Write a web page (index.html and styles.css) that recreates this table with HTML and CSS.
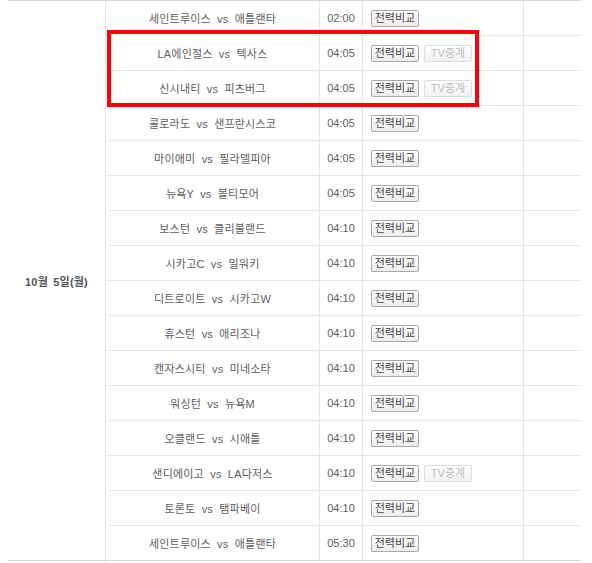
FILE: index.html
```html
<!DOCTYPE html>
<html lang="ko">
<head>
<meta charset="utf-8">
<title>경기 일정</title>
<link rel="stylesheet" href="styles.css">
</head>
<body>
<div class="schedule">
  <div class="date-cell">10월 5일(월)</div>
  <div class="rows">
    <div class="row"><div class="match">세인트루이스 vs 애틀랜타</div><div class="time">02:00</div><div class="btns"><span class="btn">전력비교</span></div><div class="extra"></div></div>
    <div class="row"><div class="match">LA에인절스 vs 텍사스</div><div class="time">04:05</div><div class="btns"><span class="btn">전력비교</span><span class="btn off">TV중계</span></div><div class="extra"></div></div>
    <div class="row"><div class="match">신시내티 vs 피츠버그</div><div class="time">04:05</div><div class="btns"><span class="btn">전력비교</span><span class="btn off">TV중계</span></div><div class="extra"></div></div>
    <div class="row"><div class="match">콜로라도 vs 샌프란시스코</div><div class="time">04:05</div><div class="btns"><span class="btn">전력비교</span></div><div class="extra"></div></div>
    <div class="row"><div class="match">마이애미 vs 필라델피아</div><div class="time">04:05</div><div class="btns"><span class="btn">전력비교</span></div><div class="extra"></div></div>
    <div class="row"><div class="match">뉴욕Y vs 볼티모어</div><div class="time">04:05</div><div class="btns"><span class="btn">전력비교</span></div><div class="extra"></div></div>
    <div class="row"><div class="match">보스턴 vs 클리블랜드</div><div class="time">04:10</div><div class="btns"><span class="btn">전력비교</span></div><div class="extra"></div></div>
    <div class="row"><div class="match">시카고C vs 밀워키</div><div class="time">04:10</div><div class="btns"><span class="btn">전력비교</span></div><div class="extra"></div></div>
    <div class="row"><div class="match">디트로이트 vs 시카고W</div><div class="time">04:10</div><div class="btns"><span class="btn">전력비교</span></div><div class="extra"></div></div>
    <div class="row"><div class="match">휴스턴 vs 애리조나</div><div class="time">04:10</div><div class="btns"><span class="btn">전력비교</span></div><div class="extra"></div></div>
    <div class="row"><div class="match">캔자스시티 vs 미네소타</div><div class="time">04:10</div><div class="btns"><span class="btn">전력비교</span></div><div class="extra"></div></div>
    <div class="row"><div class="match">워싱턴 vs 뉴욕M</div><div class="time">04:10</div><div class="btns"><span class="btn">전력비교</span></div><div class="extra"></div></div>
    <div class="row"><div class="match">오클랜드 vs 시애틀</div><div class="time">04:10</div><div class="btns"><span class="btn">전력비교</span></div><div class="extra"></div></div>
    <div class="row"><div class="match">샌디에이고 vs LA다저스</div><div class="time">04:10</div><div class="btns"><span class="btn">전력비교</span><span class="btn off">TV중계</span></div><div class="extra"></div></div>
    <div class="row"><div class="match">토론토 vs 탬파베이</div><div class="time">04:10</div><div class="btns"><span class="btn">전력비교</span></div><div class="extra"></div></div>
    <div class="row"><div class="match">세인트루이스 vs 애틀랜타</div><div class="time">05:30</div><div class="btns"><span class="btn">전력비교</span></div><div class="extra"></div></div>
  </div>
  <div class="highlight"></div>
</div>
<div class="next-group"></div>
</body>
</html>
```

FILE: styles.css
```css
html, body {
  margin: 0;
  padding: 0;
  background: #fff;
}
body {
  padding: 0 8px;
  font-family: "Liberation Sans", "Noto Sans CJK KR", sans-serif;
  font-size: 11px;
  color: #555;
}
.schedule {
  position: relative;
  width: 573px;
  display: flex;
  border-top: 1px solid #d6d6d6;
  border-bottom: 1px solid #d6d6d6;
}
.date-cell {
  width: 98px;
  box-sizing: border-box;
  border-right: 1px solid #e4e4e4;
  display: flex;
  align-items: center;
  justify-content: center;
  font-weight: bold;
  color: #555;
  letter-spacing: 0.2px;
  word-spacing: 2px;
}
.rows {
  flex: 1;
  display: flex;
  flex-direction: column;
}
.row {
  display: grid;
  grid-template-columns: 214px 43px 161px 1fr;
  height: 35px;
  box-sizing: border-box;
  border-bottom: 1px solid #e6e6e6;
}
.row:last-child {
  height: 34px;
  border-bottom: none;
}
.match, .time, .btns {
  border-right: 1px solid #e4e4e4;
  display: flex;
  align-items: center;
}
.match, .time {
  justify-content: center;
}
.match {
  color: #5e5e5e;
  letter-spacing: 0.2px;
  word-spacing: 3px;
}
.time {
  color: #5e5e5e;
}
.btns {
  padding-left: 8px;
  gap: 5px;
}
.btn {
  box-sizing: border-box;
  width: 48px;
  height: 17px;
  display: inline-flex;
  align-items: center;
  justify-content: center;
  border: 1px solid #a9a9a9;
  border-radius: 2px;
  background: linear-gradient(#ffffff, #ececec);
  color: #444;
  font-size: 11px;
  line-height: 1;
}
.btn.off {
  border-color: #dcdcdc;
  background: linear-gradient(#ffffff, #f1f1f1);
  color: #bdbdbd;
}
.highlight {
  position: absolute;
  left: 99px;
  top: 29px;
  width: 372px;
  height: 77px;
  box-sizing: border-box;
  border: 4px solid #ff0000;
}
.next-group {
  width: 98px;
  height: 4px;
  box-sizing: border-box;
  border-right: 1px solid #e4e4e4;
}
```
